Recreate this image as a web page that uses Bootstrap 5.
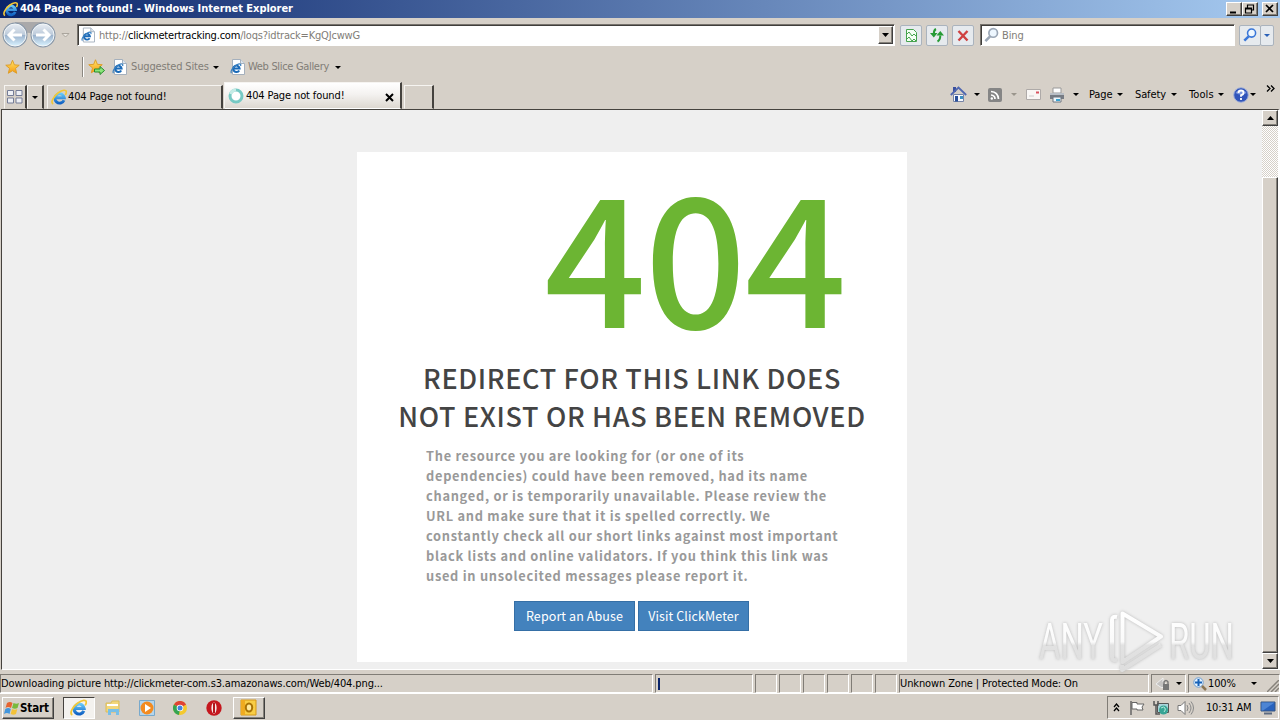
<!DOCTYPE html>
<html lang="en">
  <head>
    <meta charset="UTF-8" />
    <meta name="viewport" content="width=device-width, initial-scale=1" />
    <title>404 Page not found!</title>
    <link
      href="https://cdn.jsdelivr.net/npm/bootstrap@5.3.3/dist/css/bootstrap.min.css"
      rel="stylesheet"
    />
    <style>
      body {
        width: 1280px;
        height: 720px;
        overflow: hidden;
        background: #d6d0c8;
        color: #000;
        font: 11px/14px "DejaVu Sans Condensed", "DejaVu Sans", sans-serif;
        letter-spacing: -.12px;
        white-space: nowrap;
      }
      svg { display: block; flex: none; }
      .fix { flex: none; }
      .caret { flex: none; width: 0; height: 0; border: 3px solid transparent; border-top-color: #000; border-bottom: 0; }
      .caret.dim { border-top-color: #9a958c; }
      .raised { border: 1px solid; border-color: #fff #404040 #404040 #fff; box-shadow: inset -1px -1px #85817a; background: #d6d0c8; }
      .sunken { border: 1px solid; border-color: #807c76 #fff #fff #807c76; }
      .dimtext { color: #817d77; }

      /* title bar */
      .titlebar { height: 18px; background: linear-gradient(90deg, #0a246a, #a6caf0); color: #fff; padding-left: 3px; padding-right: 2px; }
      .titlebar b { margin-left: 2px; letter-spacing: -.03px; }
      .winbtn { width: 16px; height: 14px; }

      /* address row */
      .navrow { height: 34px; padding-left: 1px; }
      .addr { width: 818px; height: 22px; margin-left: 7px; background: #fff; border: 1px solid; border-color: #77736d #fff #fff #77736d; box-shadow: inset 1px 1px #403e3b; padding: 0 1px 0 3px; }
      .urltext { margin: 2px 0 0 4px; letter-spacing: -.2px; }
      .drop { width: 15px; height: 18px; }
      .toolbtn { width: 22px; height: 21px; border: 1px solid #aab3bd; border-radius: 2px; background: #e6eaee; }
      .searchbox { width: 255px; height: 22px; margin-left: 6px; background: #fff; border: 1px solid; border-color: #77736d #fff #fff #77736d; box-shadow: inset 1px 1px #403e3b; padding-left: 3px; }

      /* favorites and tabs */
      .favrow { height: 30px; padding-left: 5px; }
      .favsep { width: 2px; height: 20px; border-left: 1px solid #8b8780; border-right: 1px solid #fff; margin-left: 12px; }
      .tabrow { height: 27px; padding-left: 4px; }
      .qtab, .pagetab { height: 24px; border: 1px solid; border-color: #f6f4f1 #45423e transparent #f6f4f1; border-right-width: 2px; }
      .pagetab.on { height: 27px; background: linear-gradient(#fff, #f4f2f0 45%, #ddd8d1); }
      .cmdbar { height: 25px; }

      /* page viewport */
      .viewport { height: 561px; margin-left: 1px; border-top: 1px solid #45423e; border-left: 1px solid #45423e; border-right: 2px solid #fff; border-bottom: 1px solid #fff; background: #efefef; }
      .notfound { width: 550px; height: 510px; margin: 42px auto 0; background: #fff; font-family: "Noto Sans CJK SC", "Noto Sans CJK JP", sans-serif; }
      .bigcode { width: 550px; height: 207px; padding-right: 62px; color: #6cb533; font-size: 179px; line-height: 196px; font-weight: 500; letter-spacing: -1.8px; text-align: right; }
      .headline { color: #444; font-size: 27px; line-height: 38px; font-weight: 500; letter-spacing: .66px; text-align: center; margin: 0; }
      .explain { color: #999; font-size: 12.8px; line-height: 20px; font-weight: 700; letter-spacing: .73px; margin: 11px 0 0 69px; }
      .bluebtn { height: 30px; background: #4382bd; border: 1px solid #356fa6; border-radius: 0; color: #fff; font-size: 12.5px; line-height: 28px; padding: 0; letter-spacing: .1px; }
      .vbar { width: 16px; background: repeating-conic-gradient(#fff 0 25%, #d6d0c8 0 50%) 0 0/2px 2px; }
      .vbtn { height: 16px; }
      .thumb { margin-top: 51px; height: 476px; }
      .mark-over { left: 1030px; top: 604px; filter: drop-shadow(0 0 1.500px #b8b8b8); }

      /* status bar and taskbar */
      .statusbar { height: 23px; padding-top: 4px; }
      .pane { height: 19px; margin-right: 2px; }
      .taskbar { height: 27px; border-top: 1px solid #fff; padding: 2px 1px 1px 2px; }
      .startbtn { width: 52px; height: 22px; }
      .activebtn { width: 32px; height: 22px; border: 1px solid; border-color: #45423e #fff #fff #45423e; background: #f4f2ef; }
      .tray { width: 172px; height: 23px; }
    </style>
  </head>
  <body class="m-0 d-flex flex-column">
    <svg width="0" height="0" class="position-absolute">
      <defs>
        <linearGradient id="ieblue" x1="0" y1="0" x2="0" y2="1"><stop offset="0" stop-color="#66c8f8" /><stop offset="1" stop-color="#1263c4" /></linearGradient>
        <linearGradient id="orb" x1="0" y1="0" x2="0" y2="1"><stop offset="0" stop-color="#e8edf3" /><stop offset=".48" stop-color="#bccada" /><stop offset=".52" stop-color="#9cb3cd" /><stop offset="1" stop-color="#d9f2ff" /></linearGradient>
        <linearGradient id="star" x1="0" y1="0" x2="0" y2="1"><stop offset="0" stop-color="#ffe66b" /><stop offset="1" stop-color="#f79a10" /></linearGradient>
        <linearGradient id="wm" x1="0" y1="0" x2="0" y2="1"><stop offset="0" stop-color="#fff" /><stop offset=".5" stop-color="#fafafa" /><stop offset=".56" stop-color="#e2e2e2" /><stop offset="1" stop-color="#dedede" /></linearGradient>
        <symbol id="ie" viewBox="0 0 16 16">
          <path d="M13 11.2A4.700 4.700 0 1 1 13.300 8.800H4.500" fill="none" stroke="url(#ieblue)" stroke-width="2.900" />
          <path d="M2.200 15C-.8 13.600 2.400 7.400 7 4S15.400.4 15.300 3.200C15.300 4.300 14.800 5.200 14.300 6" fill="none" stroke="#f3c737" stroke-width="1.700" />
        </symbol>
        <symbol id="iedoc" viewBox="0 0 15 16">
          <path d="M2.500.5h8l4 4v11h-12z" fill="#fff" stroke="#a5b0bd" /><path d="M10.500.5v4h4" fill="#dce5ee" stroke="#a5b0bd" />
          <path d="M9.200 11.400a3.200 3.200 0 1 1 .4-2H3.600" fill="none" stroke="#1c6bb8" stroke-width="2" />
          <path d="M1.500 14C0 12.500 3 8 6.500 6s5-1 4 1" fill="none" stroke="#377fc0" stroke-width="1.200" />
        </symbol>
        <symbol id="favstar" viewBox="0 0 16 16"><path d="M8 .8l2 4.900 5.200.4-4 3.400 1.300 5.200L8 12l-4.500 2.700 1.300-5.200-4-3.400L6 5.700z" fill="url(#star)" stroke="#dc9c28" /></symbol>
        <symbol id="lens" viewBox="0 0 16 16"><circle cx="9.800" cy="5.800" r="4.600" fill="#eef7ff" stroke="currentColor" stroke-width="1.800" /><path d="M6.500 9.500L1.500 14.500" stroke="currentColor" stroke-width="2.800" /></symbol>
      </defs>
    </svg>

    <div class="titlebar fix d-flex align-items-center">
      <svg width="15" height="16"><use href="#ie" width="15" height="16" /></svg>
      <b>404 Page not found! - Windows Internet Explorer</b>
      <div class="winbtn raised fix ms-auto"><svg width="14" height="12"><path d="M3 9.500h6" stroke="#000" stroke-width="2" /></svg></div>
      <div class="winbtn raised fix"><svg width="14" height="12"><path d="M4.500 4.500V2h6v5H8.500M4.500 2h6M2.500 5h6v5h-6zM2.500 6h6" fill="none" stroke="#000" stroke-width="1.200" /></svg></div>
      <div class="winbtn raised fix ms-1"><svg width="14" height="12"><path d="M3 2l7 7M10 2L3 9" stroke="#000" stroke-width="1.700" /></svg></div>
    </div>

    <div class="navrow fix d-flex align-items-center">
      <svg width="69" height="28" viewBox="0 0 69 28">
        <path d="M14 1h29v3c-9 1-6 8-14 8S23 5 14 4z" fill="#aaa9aa" />
        <circle cx="14" cy="14" r="12.500" fill="#8998a9" /><circle cx="14" cy="14" r="11" fill="url(#orb)" stroke="#f4f8fa" />
        <circle cx="42" cy="14" r="12.500" fill="#8998a9" /><circle cx="42" cy="14" r="11" fill="url(#orb)" stroke="#f4f8fa" />
        <path d="M21 14H8M13.500 8.500L8 14l5.500 5.500M35 14h13M42.500 8.500L48 14l-5.500 5.500" fill="none" stroke="#fff" stroke-width="3" />
        <path d="M61 12.500h7l-3.500 3.500z" fill="#e9e5df" stroke="#aaa59d" />
      </svg>
      <div class="addr fix d-flex align-items-center">
        <svg width="14" height="16"><use href="#iedoc" width="14" height="16" /></svg>
        <span class="urltext dimtext">http://<span class="text-black">clickmetertracking.com</span>/loqs?idtrack=KgQJcwwG</span>
        <div class="drop raised fix ms-auto d-flex align-items-center justify-content-center"><svg width="7" height="4"><path d="M0 0h7L3.500 4z" /></svg></div>
      </div>
      <div class="d-flex" style="gap: 4px; margin-left: 5px">
        <div class="toolbtn"><svg width="20" height="19"><path d="M5.500 3.500h7l3 3v9h-10z" fill="#f4fff4" stroke="#46a34e" /><path d="M5 9l3-3 3 4 2-2 2 2M5 14l3-3 3 4 2-2 2 2" fill="none" stroke="#46a34e" /></svg></div>
        <div class="toolbtn"><svg width="20" height="19"><path d="M3 7h7.500L6.800 11.500zM9.500 9.500H17L13.300 5z" fill="#269b35" /><path d="M9 3Q6.800 4 6.800 8M10.500 15.500q2.800-1.500 2.800-6" fill="none" stroke="#269b35" stroke-width="2" /></svg></div>
        <div class="toolbtn"><svg width="20" height="19"><path d="M5.500 5l9 9.500M14.500 5l-9 9.500" stroke="#cf4040" stroke-width="2.400" /></svg></div>
      </div>
      <div class="searchbox fix d-flex align-items-center dimtext">
        <svg width="15" height="16" color="#9ba7b6"><use href="#lens" width="15" height="16" /></svg>
        <span style="margin: 2px 0 0 3px">Bing</span>
      </div>
      <div class="toolbtn fix ms-1 d-flex align-items-center justify-content-center"><svg width="14" height="14" color="#3976d8"><use href="#lens" width="14" height="14" /></svg></div>
      <div class="toolbtn fix d-flex align-items-center justify-content-center" style="width: 14px; margin-left: -1px"><i class="caret" style="border-top-color: #2a61b8"></i></div>
    </div>

    <div class="favrow fix d-flex align-items-center">
      <svg width="15" height="16"><use href="#favstar" width="15" height="16" /></svg>
      <span class="fix" style="width: 46px; margin-left: 4px; letter-spacing: .1px">Favorites</span>
      <div class="favsep fix"></div>
      <svg width="18" height="17" style="margin-left: 4px"><use href="#favstar" width="15" height="15" /><path d="M6.500 10H12V7.500l4.500 4-4.500 4V13H6.500z" fill="#8be57a" stroke="#268c2d" /></svg>
      <svg width="15" height="16" style="margin-left: 6px"><use href="#iedoc" width="15" height="16" /></svg>
      <span class="dimtext fix" style="width: 78px; margin-left: 4px; letter-spacing: -.15px">Suggested Sites</span><i class="caret" style="margin-left: 4px"></i>
      <svg width="15" height="16" style="margin-left: 11px"><use href="#iedoc" width="15" height="16" /></svg>
      <span class="dimtext fix" style="width: 83px; margin-left: 3px; letter-spacing: -.32px">Web Slice Gallery</span><i class="caret" style="margin-left: 4px"></i>
    </div>

    <div class="tabrow fix d-flex align-items-end">
      <div class="qtab fix d-flex align-items-center justify-content-center" style="width: 23px"><svg width="16" height="14"><path d="M.5.5h6v5h-6zM9 .5h6v5H9zM.5 8h6v5h-6zM9 8h6v5H9z" fill="#eef0f5" stroke="#747c97" /></svg></div>
      <div class="qtab fix d-flex align-items-center justify-content-center" style="width: 17px"><i class="caret"></i></div>
      <div class="pagetab fix d-flex align-items-center" style="width: 176px; margin-left: 3px; padding-left: 3px">
        <svg width="16" height="16"><use href="#ie" width="16" height="16" /></svg><span style="margin-left: 1px">404 Page not found!</span>
      </div>
      <div class="pagetab on fix d-flex align-items-center" style="width: 178px; margin-left: 1px; padding: 0 6px 0 3px">
        <svg width="16" height="16"><circle cx="8" cy="8" r="6" fill="#fff" stroke="#77c9c4" stroke-width="3" /><path d="M2.500 6A6 6 0 0 1 8 2" fill="none" stroke="#c4ece6" stroke-width="3" /></svg><span style="margin: 1px 0 0 2px">404 Page not found!</span>
        <svg width="9" height="9" class="ms-auto mt-1"><path d="M1 1l7 7M8 1L1 8" stroke="#000" stroke-width="2" /></svg>
      </div>
      <div class="pagetab fix" style="width: 30px; margin-left: 2px"></div>
      <div class="cmdbar d-flex align-items-center align-self-start" style="margin-left: 516px">
        <svg width="17" height="17"><path d="M3.500 8.500h10v7h-10z" fill="#f7f9ff" stroke="#7784a6" /><path d="M3 1h3v5H3z" fill="#3a4f9e" /><path d="M.8 9L8.500 1.500 16.200 9" fill="none" stroke="#5067b0" stroke-width="1.800" /><path d="M5 10h3v5.500H5z" fill="#294f9a" /><path d="M10 10h3v3h-3z" fill="#3c91c4" /></svg>
        <i class="caret" style="margin-left: 7px"></i>
        <svg width="14" height="14" style="margin-left: 8px"><rect width="14" height="14" rx="2" fill="#858585" /><path d="M3 3.500q7 .5 7.500 7.500M3 7q4 .3 4 4" fill="none" stroke="#fff" stroke-width="1.700" /><circle cx="3.800" cy="10.500" r="1.200" fill="#fff" /></svg>
        <i class="caret dim" style="margin-left: 9px"></i>
        <svg width="15" height="11" style="margin-left: 9px"><path d="M.5.5h14v10H.5z" fill="#f9f7f5" stroke="#aeaaa8" /><path d="M10 2.500h3v2h-3z" fill="#d8525f" /><path d="M3 7h5" stroke="#ccc" /></svg>
        <svg width="16" height="16" style="margin-left: 8px"><path d="M4 1h8v5H4z" fill="#fff" stroke="#999" /><path d="M1 6h14v6H1z" fill="#777c84" /><path d="M1 7h14" stroke="#b9bfc6" stroke-width="2" /><path d="M4 10h8v5H4z" fill="#eef6fb" stroke="#6e7780" /><path d="M7 12h4v2H7z" fill="#3aa3d0" /></svg>
        <i class="caret" style="margin-left: 8px"></i>
        <span class="fix" style="width: 27px; margin-left: 10px">Page</span><i class="caret" style="margin-left: 1px"></i>
        <span class="fix" style="width: 34px; margin-left: 12px">Safety</span><i class="caret" style="margin-left: 2px"></i>
        <span class="fix" style="width: 28px; margin-left: 12px; letter-spacing: .1px">Tools</span><i class="caret" style="margin-left: 1px"></i>
        <svg width="16" height="16" style="margin-left: 9px"><circle cx="8" cy="8" r="7.300" fill="#3155ba" stroke="#a3b1d8" /><path d="M2.500 6a6 5 0 0 1 11 0q-5.500 3-11 0" fill="#7b97df" /><path d="M5.500 6q0-2.500 2.500-2.500t2.500 2.200T8 8.200v1.500M8 11v2" fill="none" stroke="#fff" stroke-width="1.800" /></svg>
        <i class="caret" style="margin-left: 1px"></i>
        <svg width="9" height="7" style="margin: -12px 0 0 10px"><path d="M1 .5l3 3-3 3M5 .5l3 3-3 3" fill="none" stroke="#000" stroke-width="1.300" /></svg>
      </div>
    </div>

    <div class="viewport fix d-flex">
      <div class="flex-grow-1">
        <main class="notfound">
          <div class="bigcode">404</div>
          <h1 class="headline">REDIRECT FOR THIS LINK DOES<br />NOT EXIST OR HAS BEEN REMOVED</h1>
          <p class="explain mb-0">
            The resource you are looking for (or one of its<br />
            dependencies) could have been removed, had its name<br />
            changed, or is temporarily unavailable. Please review the<br />
            URL and make sure that it is spelled correctly. We<br />
            constantly check all our short links against most important<br />
            black lists and online validators. If you think this link was<br />
            used in unsolecited messages please report it.
          </p>
          <div class="d-flex" style="gap: 3px; margin: 15px 0 0 157px">
            <a class="btn bluebtn" style="width: 121px">Report an Abuse</a>
            <a class="btn bluebtn" style="width: 111px">Visit ClickMeter</a>
          </div>
        </main>
      </div>
      <div class="vbar fix d-flex flex-column">
        <div class="vbtn raised fix d-flex align-items-center justify-content-center"><svg width="7" height="4"><path d="M0 4h7L3.500 0z" /></svg></div>
        <div class="thumb raised fix"></div>
        <div class="vbtn raised fix d-flex align-items-center justify-content-center"><svg width="7" height="4"><path d="M0 0h7L3.500 4z" /></svg></div>
      </div>
    </div>

    <svg class="mark-over position-absolute" width="250" height="72">
      <g fill="url(#wm)" font-family="Roboto" font-size="50" font-weight="400" letter-spacing="0">
        <text x="9" y="55" textLength="64" lengthAdjust="spacingAndGlyphs">ANY</text>
        <text x="139" y="55" textLength="65" lengthAdjust="spacingAndGlyphs">RUN</text>
      </g>
      <path d="M92.500 9.500V58L131 32.500zM87 13q-5-1-5 3v37q0 4 5 3M92 61v5l39-25" fill="none" stroke="url(#wm)" stroke-width="4" stroke-linejoin="round" />
    </svg>

    <div class="statusbar fix d-flex">
      <div class="pane sunken fix d-flex align-items-center" style="width: 653px"><span>Downloading picture http://clickmeter-com.s3.amazonaws.com/Web/404.png...</span></div>
      <div class="pane sunken fix d-flex align-items-center" style="width: 98px"><svg width="6" height="14"><path d="M2 1h2v12H2z" fill="#0a246a" /></svg></div>
      <div class="pane sunken fix" style="width: 22px"></div>
      <div class="pane sunken fix" style="width: 22px"></div>
      <div class="pane sunken fix" style="width: 22px"></div>
      <div class="pane sunken fix" style="width: 22px"></div>
      <div class="pane sunken fix" style="width: 22px"></div>
      <div class="pane sunken fix" style="width: 22px"></div>
      <div class="pane sunken fix d-flex align-items-center" style="width: 250px"><span>Unknown Zone | Protected Mode: On</span></div>
      <div class="pane sunken fix d-flex align-items-center" style="width: 35px; padding-left: 3px">
        <svg width="16" height="15"><path d="M1 8l7-6v4l3 2-4 4z" fill="#c4c2c1" stroke="#eee" /><path d="M8 8h6v6H8z" fill="#777" /><path d="M9 8V6q2-3 4 0v2" fill="none" stroke="#777" stroke-width="1.400" /></svg>
        <i class="caret" style="margin-left: 5px"></i>
      </div>
      <div class="pane sunken d-flex align-items-center flex-grow-1 me-0" style="padding-left: 4px">
        <svg width="14" height="14"><circle cx="5.500" cy="5.500" r="4.700" fill="#e6f3ff" stroke="#6c9dd2" /><path d="M9 9l4 4" stroke="#8c7655" stroke-width="2.500" /><path d="M5.500 2v7M2 5.500h7" stroke="#1762b8" stroke-width="2" /></svg>
        <span class="fix" style="width: 35px; margin-left: 1px">100%</span>
        <i class="caret" style="margin-left: 8px"></i>
        <svg width="12" height="12" class="ms-auto align-self-end"><path d="M0 12L12 0M4 12l8-8M8 12l4-4" stroke="#86827b" stroke-width="1.500" /></svg>
      </div>
    </div>

    <div class="taskbar fix d-flex align-items-center">
      <div class="startbtn raised fix d-flex align-items-center">
        <svg width="15" height="16" style="margin-left: 1px"><path d="M3 3q3-2 5.500 0L7 8Q4 6 1.500 8z" fill="#e66430" /><path d="M9.500 3q3 1.500 5.500 0l-1.500 5Q11 9.500 8 8z" fill="#79b93c" /><path d="M1.300 9q3-2 5.500 0L5.500 14Q3 12 0 14z" fill="#4396dc" /><path d="M8 9q3 1.500 5.300 0L12 14q-2.500 1.500-5.300 0z" fill="#f4c238" /></svg>
        <b style="margin-left: 1px; font-size: 11.500px; letter-spacing: -.1px">Start</b>
      </div>
      <div class="activebtn fix d-flex align-items-center" style="margin-left: 9px; padding-left: 6px"><svg width="17" height="17"><use href="#ie" width="17" height="17" /></svg></div>
      <svg width="16" height="16" style="margin-left: 10px"><path d="M1 3h5l1-2h7v11H1z" fill="#f2d77b" stroke="#d9bc5d" /><path d="M2 5h11" stroke="#fff" stroke-width="2" /><path d="M3 15V9h11v6h-3v-3H6v3z" fill="#77bfe8" /></svg>
      <svg width="16" height="16" style="margin-left: 18px"><path d="M.5.5h15v15H.5z" fill="#b5d5ec" stroke="#78a9cc" /><circle cx="8" cy="8" r="6.500" fill="#f38b21" /><path d="M6 4l6 4-6 4z" fill="#fff" /></svg>
      <svg width="14" height="14" style="margin-left: 18px"><circle cx="7" cy="7" r="7" fill="#f4c92e" /><path d="M7 7L.9 3.500A7 7 0 0 1 13.100 3.500z" fill="#df4336" /><path d="M7 7L.9 3.500A7 7 0 0 0 6 14z" fill="#35a452" /><circle cx="7" cy="7" r="3.300" fill="#fff" /><circle cx="7" cy="7" r="2.500" fill="#4384df" /></svg>
      <svg width="16" height="16" style="margin-left: 19px"><circle cx="8" cy="8" r="7.700" fill="#c5171e" /><ellipse cx="8" cy="8" rx="2.600" ry="5.500" fill="#f8eceb" /><path d="M8 3v10" stroke="#b4161c" stroke-width="2" /></svg>
      <div class="raised fix d-flex align-items-center" style="width: 32px; height: 22px; margin-left: 11px; padding-left: 6px"><svg width="17" height="17"><path d="M1 1h15v15H1z" fill="#f8cd45" stroke="#d59819" /><path d="M1 1h4v15H1z" fill="#f0ab20" /><ellipse cx="9" cy="8.500" rx="3.200" ry="4" fill="#ffe99d" stroke="#a87206" stroke-width="2" /></svg></div>
      <div class="tray sunken fix d-flex align-items-center ms-auto">
        <svg width="7" height="9" style="margin-left: 5px"><path d="M1 4l2.500-3L6 4M1 8l2.500-3L6 8" fill="none" stroke="#000" stroke-width="1.300" /></svg>
        <svg width="17" height="16" style="margin-left: 9px"><path d="M2 1v14" stroke="#666" stroke-width="1.500" /><path d="M3 2.500h5v1.500h7l-2 3 1 3H8V9H3z" fill="#fff" stroke="#666" /></svg>
        <svg width="16" height="16" style="margin-left: 7px"><path d="M4.500 3.500h11v9h-11z" fill="#a8d5da" stroke="#555" /><path d="M1 1v4h4V1M3 5v9h4" fill="none" stroke="#555" stroke-width="1.500" /><circle cx="10.500" cy="10" r="4.500" fill="#37a494" /><path d="M8 8q3-2 4 0t-1 4" fill="none" stroke="#b8ebdd" /></svg>
        <svg width="17" height="16" style="margin-left: 8px"><path d="M1 5.500h3l4-4v13l-4-4H1z" fill="#fff" stroke="#777" /><path d="M10 5q2 3 0 6M12 3q4 5 0 10M14 1.500q5 6.500 0 13" fill="none" stroke="#888" /></svg>
        <span class="fix" style="width: 54px; margin-left: 12px; letter-spacing: -.2px">10:31 AM</span>
        <svg width="16" height="14"><path d="M1 1h14v9H1z" fill="#2862bd" stroke="#37557f" /><path d="M1.500 1.500h13L3 9.500H1.500z" fill="#4d85d4" /><path d="M4 12.500h8" stroke="#5c6a80" stroke-width="2" /></svg>
      </div>
    </div>
    <script src="https://cdn.jsdelivr.net/npm/bootstrap@5.3.3/dist/js/bootstrap.bundle.min.js"></script>
  </body>
</html>
